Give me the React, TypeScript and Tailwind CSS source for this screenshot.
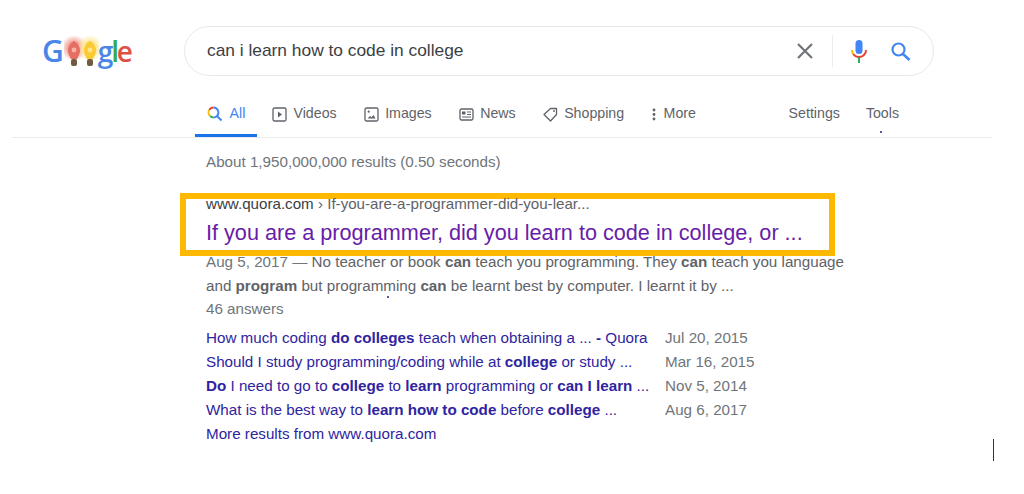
const font = "font-['Liberation_Sans',Arial,sans-serif]";

const GoogleLogo = () => (
  <div className="flex w-[90px] items-center font-['Open_Sans',sans-serif] text-[30px] font-semibold leading-none">
    <span className="text-[#4a86e8]">G</span>
    <svg width="35" height="36" viewBox="0 0 35 36" className="shrink-0">
      <defs>
        <radialGradient id="glowRed">
          <stop offset="0.5" stopColor="#f4a99f" />
          <stop offset="1" stopColor="#f4a99f" stopOpacity="0" />
        </radialGradient>
        <radialGradient id="glowYellow">
          <stop offset="0.5" stopColor="#fde99a" />
          <stop offset="1" stopColor="#fde99a" stopOpacity="0" />
        </radialGradient>
      </defs>
      <circle cx="10" cy="15" r="13" fill="url(#glowRed)" />
      <circle cx="26" cy="15" r="13" fill="url(#glowYellow)" />
      <path d="M10 8c3.500 1.500 6 5.500 6 9.500 0 3.500-1.800 6.500-3 8.500H7c-1.200-2-3-5-3-8.500 0-4 2.500-8 6-9.500z" fill="#e66f63" />
      <path d="M26 8c3.500 1.500 6 5.500 6 9.500 0 3.500-1.800 6.500-3 8.500h-6c-1.200-2-3-5-3-8.500 0-4 2.500-8 6-9.500z" fill="#fbcb36" />
      <circle cx="10" cy="17" r="2.400" fill="#f5b3aa" />
      <circle cx="26" cy="17" r="2.400" fill="#fde68c" />
      <rect x="7" y="26" width="6" height="7" rx="2" fill="#6f5b3f" />
      <rect x="23" y="26" width="6" height="7" rx="2" fill="#6f5b3f" />
    </svg>
    <span className="-ml-[1px] text-[28px] tracking-[-2px] text-[#4a86e8]">g</span>
    <span className="text-[28px] tracking-[-2.500px] text-[#3aa757]">l</span>
    <span className="text-[28px] tracking-[-2px] text-[#dd5144]">e</span>
  </div>
);

const XIcon = () => (
  <svg width="16" height="16" viewBox="0 0 16 16" stroke="#70757a" strokeWidth="2.200">
    <path d="M1 1l14 14M15 1L1 15" />
  </svg>
);

const MicIcon = () => (
  <svg width="16" height="23" viewBox="0 0 16 23">
    <rect x="4.500" y="0" width="7" height="14" rx="3.500" fill="#4285f4" />
    <path d="M1 10c0 1.700.4 3 1.300 4" fill="none" stroke="#fbbc05" strokeWidth="2" />
    <path d="M2.300 14C3.500 16 5.500 17 8 17s4.500-1 5.700-3c.9-1 1.300-2.300 1.300-4" fill="none" stroke="#ea4335" strokeWidth="2" />
    <rect x="7" y="17" width="2" height="6" fill="#34a853" />
  </svg>
);

const SearchIcon = () => (
  <svg width="20" height="19" viewBox="0 0 20 19" fill="none" stroke="#4285f4">
    <circle cx="7.500" cy="7.500" r="6" strokeWidth="2.200" />
    <path d="M12 12l6.500 6" strokeWidth="2.600" />
  </svg>
);

const AllIcon = () => (
  <svg width="16" height="16" viewBox="0 0 16 16" fill="none" strokeWidth="1.800">
    <path d="M6.500 1.500a5 5 0 0 0-4.300 2.500" stroke="#ea4335" />
    <path d="M2.200 4a5 5 0 0 0 .9 6" stroke="#fbbc05" />
    <path d="M3.100 10a5 5 0 0 0 3.400 1.500" stroke="#34a853" />
    <path d="M6.500 1.500a5 5 0 0 1 3.500 8.500 5 5 0 0 1-3.500 1.500" stroke="#4285f4" />
    <path d="M10 10l4.500 4.500" stroke="#4285f4" strokeWidth="2" />
  </svg>
);

const VideoIcon = () => (
  <svg width="15" height="15" viewBox="0 0 15 15" fill="none" stroke="#5f6368" strokeWidth="1.300">
    <rect x="1" y="1" width="13" height="13" rx="1.500" />
    <path d="M6 4.500l4 3-4 3z" fill="#5f6368" stroke="none" />
  </svg>
);

const ImageIcon = () => (
  <svg width="15" height="15" viewBox="0 0 15 15" fill="none" stroke="#5f6368" strokeWidth="1.300">
    <rect x="1" y="1" width="13" height="13" rx="1.500" />
    <circle cx="4.700" cy="4.700" r="1.100" fill="#5f6368" stroke="none" />
    <path d="M3.500 11.500l2.500-2.500 1.500 1.300L9.500 8l2 3.500z" fill="#5f6368" stroke="none" />
  </svg>
);

const NewsIcon = () => (
  <svg width="15" height="13" viewBox="0 0 15 13" fill="none" stroke="#5f6368" strokeWidth="1.300">
    <rect x="1" y="1" width="13" height="11" rx="1.500" />
    <rect x="3" y="3.500" width="3.500" height="3" fill="#5f6368" stroke="none" />
    <path d="M8 4h4M8 6.500h4M3 9h9" strokeWidth="1.100" />
  </svg>
);

const TagIcon = () => (
  <svg width="15" height="15" viewBox="0 0 15 15" fill="none" stroke="#5f6368" strokeWidth="1.300">
    <path d="M1 7.500L7.500 1.500H13.500V7.500L7.500 14z" strokeLinejoin="round" />
    <circle cx="11" cy="4" r="0.900" fill="#5f6368" stroke="none" />
  </svg>
);

const DotsIcon = () => (
  <svg width="6" height="13" viewBox="0 0 6 13" fill="#5f6368">
    <circle cx="3" cy="2" r="1.400" />
    <circle cx="3" cy="6.500" r="1.400" />
    <circle cx="3" cy="11" r="1.400" />
  </svg>
);

const tabs = [
  { label: "Videos", icon: <VideoIcon /> },
  { label: "Images", icon: <ImageIcon /> },
  { label: "News", icon: <NewsIcon /> },
  { label: "Shopping", icon: <TagIcon /> },
  { label: "More", icon: <DotsIcon /> },
];

const sitelinks = [
  { text: <>How much coding <b>do colleges</b> teach when obtaining a ... <b>-</b> Quora</>, date: "Jul 20, 2015" },
  { text: <>Should I study programming/coding while at <b>college</b> or study ...</>, date: "Mar 16, 2015" },
  { text: <><b>Do</b> I need to go to <b>college</b> to <b>learn</b> programming or <b>can I learn</b> ...</>, date: "Nov 5, 2014" },
  { text: <>What is the best way to <b>learn how to code</b> before <b>college</b> ...</>, date: "Aug 6, 2017" },
];

export default function App() {
  return (
    <div className={`relative h-[494px] w-[1024px] overflow-hidden bg-white ${font}`}>
      {/* Search header */}
      <header className="flex items-center pl-[42px] pt-[26px]">
        <GoogleLogo />
        <div className="ml-[52px] flex h-[50px] w-[750px] items-center rounded-full border border-[#e6e8ea] pl-[22px] pr-[22px]">
          <span className="flex-1 pb-[2px] text-[17.350px] text-[#3c4043]">can i learn how to code in college</span>
          <XIcon />
          <div className="ml-[19px] mr-[18px] h-[32px] w-px bg-[#ebedef]" />
          <MicIcon />
          <div className="ml-[24px]">
            <SearchIcon />
          </div>
        </div>
      </header>

      {/* Tabs */}
      <nav className="ml-[12px] mt-[18px] flex h-[44px] w-[980px] items-stretch border-b border-[#ebebeb] pl-[183px] pr-[93px] text-[14.200px] text-[#5f6368]">
        <div className="flex w-[62px] items-center justify-center gap-[7px] border-b-[3px] border-[#1a73e8] text-[#4285f4]">
          <AllIcon />
          <span>All</span>
        </div>
        <div className="ml-[15px] flex gap-[27px] pb-[3px]">
          {tabs.map((t) => (
            <div key={t.label} className="flex items-center gap-[6.500px]">
              {t.icon}
              <span>{t.label}</span>
            </div>
          ))}
        </div>
        <div className="ml-auto flex items-center gap-[26px] pb-[3px]">
          <span>Settings</span>
          <span>Tools</span>
        </div>
      </nav>

      {/* Results */}
      <main className="pl-[206px]">
        <p className="mt-[14px] text-[15.200px] leading-[20px] text-[#70757a]">About 1,950,000,000 results (0.50 seconds)</p>

        <div className="-ml-[26px] mt-[21px] h-[63px] w-[655px] border-[6px] border-[#fdb900] pl-[20px]">
          <p className="-mt-[5px] whitespace-nowrap text-[15.150px] leading-[20px] text-[#5f6368]">
            <span className="text-[#3c4043]">www.quora.com</span> › If-you-are-a-programmer-did-you-lear...
          </p>
          <p className="mt-[6px] whitespace-nowrap text-[21.650px] leading-[26px] text-[#681da8]">
            If you are a programmer, did you learn to code in college, or ...
          </p>
        </div>

        <div className="-mt-[6px] whitespace-nowrap text-[15.200px] leading-[23.500px] text-[#5f6368]">
          <p><span className="text-[#70757a]">Aug 5, 2017 —</span> No teacher or book <b>can</b> teach you programming. They <b>can</b> teach you language</p>
          <p>and <b>program</b> but programming <b>can</b> be learnt best by computer. I learnt it by ...</p>
          <p className="text-[#70757a]">46 answers</p>
        </div>

        <div className="mt-[5px] grid w-[560px] grid-cols-[459px_1fr] text-[15.200px] leading-[24px]">
          {sitelinks.map((s) => (
            <div key={s.date} className="contents">
              <span className="whitespace-nowrap text-[#2f24a0]">{s.text}</span>
              <span className="whitespace-nowrap text-[#70757a]">{s.date}</span>
            </div>
          ))}
          <span className="col-span-2 text-[#2f24a0]">More results from www.quora.com</span>
        </div>
      </main>

      {/* Stray capture artefacts: text cursor and specks */}
      <div className="absolute left-[993px] top-[439px] h-[22px] w-px bg-[#333]" />
      <div className="absolute left-[880px] top-[131px] h-[2px] w-[2px] rounded-full bg-[#1a237e]" />
      <div className="absolute left-[387px] top-[296px] h-[2px] w-[2px] rounded-full bg-[#1a237e]" />
    </div>
  );
}
